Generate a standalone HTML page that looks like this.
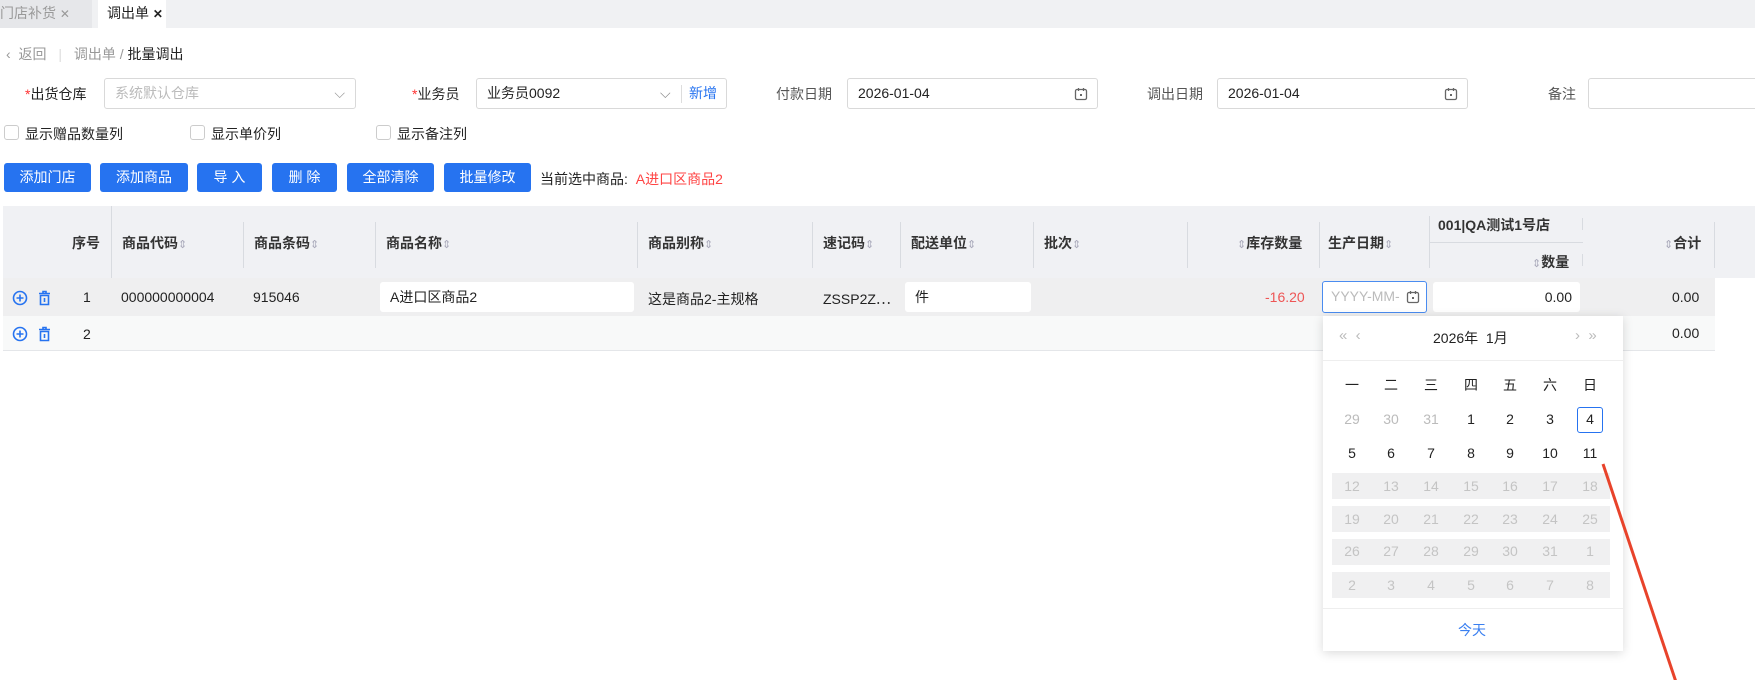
<!DOCTYPE html>
<html><head><meta charset="utf-8"><style>
*{box-sizing:border-box;margin:0;padding:0}
body{width:1755px;height:680px;overflow:hidden;background:#fff;font-family:"Liberation Sans","Noto Sans CJK SC",sans-serif;font-size:14px;color:#222;position:relative}
.a{position:absolute;white-space:nowrap}
.inp{position:absolute;border:1px solid #d9d9d9;border-radius:3px;background:#fff;height:31px;line-height:29px;padding-left:10px}
.btn{position:absolute;top:163px;height:29px;line-height:29px;background:#2673f0;color:#fff;border-radius:3px;text-align:center;font-size:14px}
.cb{position:absolute;top:125px;width:15px;height:15px;border:1px solid #ccc;border-radius:3px;background:#fff}
.th{position:absolute;font-weight:bold;color:#333;top:233px}
.sep{position:absolute;width:1px;background:#d8dbe0}
.s{color:#aab;font-weight:normal;font-size:11px}
.d{position:absolute;width:36px;margin-left:-18px;text-align:center;line-height:20px;margin-top:-10px;font-size:14px}
.cal{position:absolute;right:9px;top:8px}
</style></head><body>
<svg width="0" height="0" style="position:absolute"><defs><symbol id="cal" viewBox="0 0 14 14"><rect x="1.5" y="2.5" width="11" height="10" rx="1.5" fill="none" stroke="#666" stroke-width="1.3"/><path d="M4.5 1v3M9.5 1v3" stroke="#666" stroke-width="1.3"/><rect x="6" y="7" width="2" height="2" fill="#666"/></symbol></defs></svg>
<!-- tabs -->
<div class="a" style="left:0;top:0;width:1755px;height:28px;background:#f0f1f3"></div>
<div class="a" style="left:0;top:0;width:92px;height:28px;background:#e6e7ea;color:#999;line-height:27px">门店补货 <span style="font-size:12px">✕</span></div>
<div class="a" style="left:98px;top:0;width:68px;height:28px;background:#fff;color:#222;line-height:27px;padding-left:9px">调出单 <span style="font-size:12px;font-weight:bold">✕</span></div>
<!-- breadcrumb -->
<div class="a" style="left:6px;top:44px;color:#999">‹ &nbsp;返回 <span style="color:#ddd;margin:0 8px">|</span> 调出单 / <span style="color:#222">批量调出</span></div>
<!-- form -->
<div class="a" style="left:25px;top:84px"><span style="color:#f33">*</span>出货仓库</div>
<div class="inp" style="left:104px;top:78px;width:252px;color:#bbb">系统默认仓库<span style="position:absolute;right:10px;color:#999">⌵</span></div>
<div class="a" style="left:412px;top:84px"><span style="color:#f33">*</span>业务员</div>
<div class="inp" style="left:476px;top:78px;width:251px">业务员0092<span style="position:absolute;left:183px;color:#888">⌵</span><span style="position:absolute;left:204px;top:6px;height:18px;border-left:1px solid #ddd"></span><span style="position:absolute;left:212px;color:#2673f0">新增</span></div>
<div class="a" style="left:776px;top:84px;color:#555">付款日期</div>
<div class="inp" style="left:847px;top:78px;width:251px">2026-01-04<svg class="cal" width="14" height="14"><use href="#cal"/></svg></div>
<div class="a" style="left:1147px;top:84px;color:#555">调出日期</div>
<div class="inp" style="left:1217px;top:78px;width:251px">2026-01-04<svg class="cal" width="14" height="14"><use href="#cal"/></svg></div>
<div class="a" style="left:1548px;top:84px;color:#555">备注</div>
<div class="inp" style="left:1588px;top:78px;width:200px"></div>
<!-- checkboxes -->
<div class="cb" style="left:4px"></div><div class="a" style="left:25px;top:124px">显示赠品数量列</div>
<div class="cb" style="left:190px"></div><div class="a" style="left:211px;top:124px">显示单价列</div>
<div class="cb" style="left:376px"></div><div class="a" style="left:397px;top:124px">显示备注列</div>
<!-- buttons -->
<div class="btn" style="left:4px;width:87px">添加门店</div>
<div class="btn" style="left:100px;width:88px">添加商品</div>
<div class="btn" style="left:197px;width:65px">导 入</div>
<div class="btn" style="left:272px;width:65px">删 除</div>
<div class="btn" style="left:347px;width:87px">全部清除</div>
<div class="btn" style="left:444px;width:87px">批量修改</div>
<div class="a" style="left:540px;top:169px">当前选中商品: <span style="color:#f44;margin-left:4px">A进口区商品2</span></div>
<!-- table header -->
<div class="a" style="left:3px;top:206px;width:1752px;height:72px;background:#f0f1f4"></div>
<div class="sep" style="left:111px;top:206px;height:145px"></div>
<div class="sep" style="left:243px;top:222px;height:46px"></div>
<div class="sep" style="left:375px;top:222px;height:46px"></div>
<div class="sep" style="left:637px;top:222px;height:46px"></div>
<div class="sep" style="left:812px;top:222px;height:46px"></div>
<div class="sep" style="left:900px;top:222px;height:46px"></div>
<div class="sep" style="left:1033px;top:222px;height:46px"></div>
<div class="sep" style="left:1187px;top:222px;height:46px"></div>
<div class="sep" style="left:1319px;top:222px;height:46px"></div>
<div class="sep" style="left:1429px;top:216px;height:52px"></div>
<div class="sep" style="left:1582px;top:218px;height:12px"></div>
<div class="sep" style="left:1582px;top:254px;height:12px"></div>
<div class="sep" style="left:1714px;top:222px;height:46px"></div>
<div class="a" style="left:1429px;top:242px;width:154px;height:1px;background:#d8dbe0"></div>
<div class="th" style="left:72px">序号</div>
<div class="th" style="left:122px">商品代码<span class="s">⇕</span></div>
<div class="th" style="left:254px">商品条码<span class="s">⇕</span></div>
<div class="th" style="left:386px">商品名称<span class="s">⇕</span></div>
<div class="th" style="left:648px">商品别称<span class="s">⇕</span></div>
<div class="th" style="left:823px">速记码<span class="s">⇕</span></div>
<div class="th" style="left:911px">配送单位<span class="s">⇕</span></div>
<div class="th" style="left:1044px">批次<span class="s">⇕</span></div>
<div class="th" style="left:1237px"><span class="s">⇕</span>库存数量</div>
<div class="th" style="left:1328px">生产日期<span class="s">⇕</span></div>
<div class="th" style="left:1438px;top:215px">001|QA测试1号店</div>
<div class="th" style="left:1532px;top:252px"><span class="s">⇕</span>数量</div>
<div class="th" style="left:1664px"><span class="s">⇕</span>合计</div>
<!-- rows -->
<div class="a" style="left:3px;top:278px;width:1712px;height:38px;background:#efeff0"></div>
<div class="a" style="left:3px;top:316px;width:1712px;height:35px;background:#f8f9f9;border-bottom:1px solid #e4e6e9"></div>
<svg class="a" style="left:12px;top:290px" width="45" height="55" viewBox="0 0 45 55" fill="none" stroke="#2673f0" stroke-width="1.6">
<circle cx="8" cy="8" r="6.5"/><path d="M8 4.5v7M4.5 8h7"/>
<path d="M27 3.5h11M31 3.5v-2h3v2M28.5 5.5h8v9h-8z M32.5 8v4"/>
<g transform="translate(0,36)"><circle cx="8" cy="8" r="6.5"/><path d="M8 4.5v7M4.5 8h7"/>
<path d="M27 3.5h11M31 3.5v-2h3v2M28.5 5.5h8v9h-8z M32.5 8v4"/></g>
</svg>
<div class="a" style="left:83px;top:289px">1</div>
<div class="a" style="left:83px;top:326px">2</div>
<div class="a" style="left:121px;top:289px">000000000004</div>
<div class="a" style="left:253px;top:289px">915046</div>
<div class="inp" style="left:380px;top:282px;width:254px;height:30px;border:none;line-height:30px">A进口区商品2</div>
<div class="a" style="left:648px;top:289px">这是商品2-主规格</div>
<div class="a" style="left:823px;top:289px">ZSSP2Z⋯</div>
<div class="inp" style="left:905px;top:282px;width:126px;height:30px;border:none;line-height:30px">件</div>
<div class="a" style="left:1265px;top:289px;color:#e55">-16.20</div>
<div class="inp" style="left:1322px;top:281px;width:105px;height:32px;border:1.5px solid #4a8cf0;color:#bbb;padding-left:8px">YYYY-MM-<svg class="cal" style="right:6px;background:#fff" width="14" height="14"><use href="#cal"/></svg></div>
<div class="inp" style="left:1433px;top:282px;width:147px;height:30px;border:none;text-align:right;padding-right:8px;line-height:30px">0.00</div>
<div class="a" style="left:1672px;top:289px">0.00</div>
<div class="a" style="left:1672px;top:325px">0.00</div>
<!-- date picker -->
<div class="a" style="left:1323px;top:316px;width:300px;height:335px;background:#fff;box-shadow:0 2px 10px rgba(0,0,0,.15)">
<div class="a" style="left:16px;top:11px;color:#bbb;font-size:15px">«&nbsp; ‹</div>
<div class="a" style="left:110px;top:12px;font-size:14px">2026年&nbsp; 1月</div>
<div class="a" style="left:252px;top:11px;color:#bbb;font-size:15px">›&nbsp; »</div>
<div class="a" style="left:0;top:44px;width:300px;height:1px;background:#eee"></div>
<div class="a" style="left:9px;top:157px;width:278px;height:26px;background:#f0f0f1"></div>
<div class="a" style="left:9px;top:190px;width:278px;height:26px;background:#f0f0f1"></div>
<div class="a" style="left:9px;top:223px;width:278px;height:26px;background:#f0f0f1"></div>
<div class="a" style="left:9px;top:256px;width:278px;height:26px;background:#f0f0f1"></div>
<div id="g"></div>
<div class="a" style="left:0;top:292px;width:300px;height:1px;background:#eee"></div>
<div class="a" style="left:135px;top:304px;color:#3a7ff0">今天</div>
</div>
<script>
var xs=[29,68,108,148,187,227,267],ys=[69,103,137,170,203,235,269];
var rows=[["一","二","三","四","五","六","日"],["29","30","31","1","2","3","4"],["5","6","7","8","9","10","11"],["12","13","14","15","16","17","18"],["19","20","21","22","23","24","25"],["26","27","28","29","30","31","1"],["2","3","4","5","6","7","8"]];
var h="";rows.forEach(function(r,i){r.forEach(function(t,j){var c="#222";if(i==1&&j<3)c="#bbb";if(i>=3)c="#c4c4c4";var st="left:"+xs[j]+"px;top:"+ys[i]+"px;color:"+c;var inner=t;if(i==1&&j==6)inner='<span style="display:inline-block;width:26px;height:26px;line-height:23px;border:1.5px solid #2673f0;border-radius:3px;margin-top:-3px">4</span>';h+='<div class="d" style="'+st+'">'+inner+'</div>';});});
document.getElementById("g").outerHTML=h;
</script>
<svg class="a" style="left:0;top:0" width="1755" height="680"><line x1="1603" y1="464" x2="1676" y2="682" stroke="#e8432b" stroke-width="3"/></svg>
</body></html>
